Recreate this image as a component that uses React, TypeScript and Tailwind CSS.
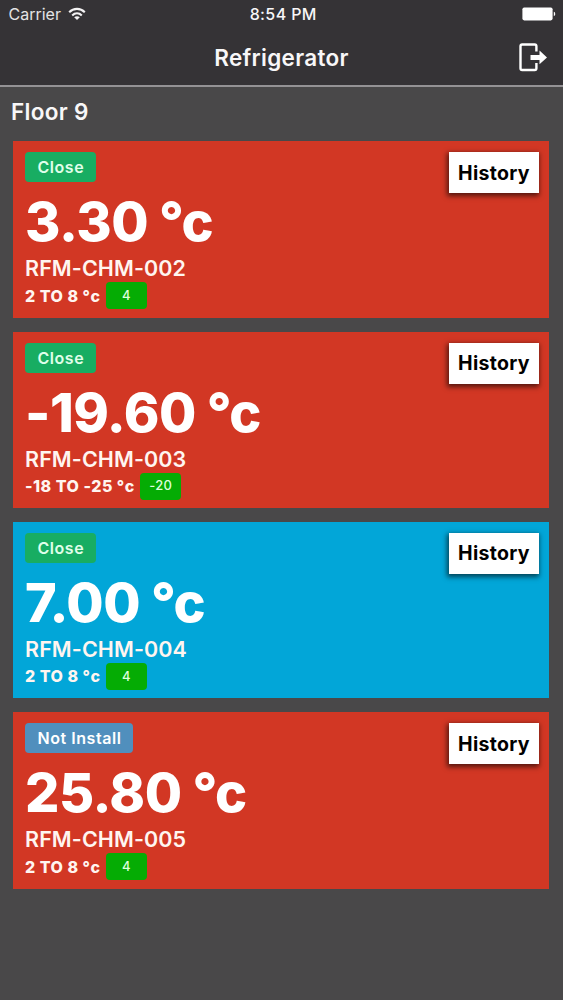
type Fridge = {
  code: string;
  temp: string;
  range: string;
  target: string;
  installed: boolean;
  alert: boolean;
};

const fridges: Fridge[] = [
  { code: "RFM-CHM-002", temp: "3.30", range: "2 TO 8", target: "4", installed: true, alert: true },
  { code: "RFM-CHM-003", temp: "-19.60", range: "-18 TO -25", target: "-20", installed: true, alert: true },
  { code: "RFM-CHM-004", temp: "7.00", range: "2 TO 8", target: "4", installed: true, alert: false },
  { code: "RFM-CHM-005", temp: "25.80", range: "2 TO 8", target: "4", installed: false, alert: true },
];

const WifiIcon = () => (
  <svg width="18" height="14" viewBox="0 0 18 14" fill="none" stroke="#f4f3f4" strokeWidth="2.1">
    <path d="M1.2 5.2C5.6 .8 12.4 .8 16.8 5.2" />
    <path d="M4.2 8.4C7 5.7 11 5.7 13.8 8.4" />
    <path d="M9 13L6.2 10.2C7.8 8.8 10.2 8.8 11.8 10.2Z" fill="#f4f3f4" stroke="none" />
  </svg>
);

const BatteryIcon = () => (
  <svg width="34" height="14" viewBox="0 0 34 14" fill="#fff">
    <rect x=".4" y=".4" width="30.2" height="13" rx="1.8" />
    <path d="M31.8 4.8C33.7 5.3 33.7 8.7 31.8 9.2Z" />
  </svg>
);

const LogoutIcon = () => (
  <svg width="29" height="29" viewBox="0 0 29 29" fill="none">
    <path d="M17.4 8.6V3.2Q17.4 1.5 15.7 1.5H3.2Q1.5 1.5 1.5 3.2V25.3Q1.5 27 3.2 27H15.7Q17.4 27 17.4 25.3V19.9" stroke="#fff" strokeWidth="2.4" />
    <path d="M11.5 11.9H20.5V7.6L28 14.4L20.5 21.2V16.9H11.5Z" fill="#fff" />
  </svg>
);

const Header = () => (
  <div className="h-[87px] bg-[#353336] border-b-2 border-[#949295] text-[#f8f7f8]">
    <div className="grid grid-cols-[1fr_auto_1fr] items-center h-7 pl-[8.5px] pr-[7px]">
      <div className="flex items-center gap-[7px] text-[16px] text-[#e4e3e4]">
        <span>Carrier</span>
        <WifiIcon />
      </div>
      <div className="pl-[2px] text-center text-[16px] font-medium tracking-[0.4px]">8:54 PM</div>
      <div className="flex justify-end">
        <BatteryIcon />
      </div>
    </div>
    <div className="grid grid-cols-[1fr_auto_1fr] items-center h-[58px] px-[15px]">
      <div></div>
      <div className="pt-px text-[22.5px] font-semibold tracking-[0.3px]">Refrigerator</div>
      <div className="flex justify-end">
        <LogoutIcon />
      </div>
    </div>
  </div>
);

const Card = ({ fridge }: { fridge: Fridge }) => (
  <div className={`flex justify-between items-start h-[176.5px] pl-3 pr-[10px] pt-[11px] text-white ${fridge.alert ? "bg-[#d23724]" : "bg-[#02a6d8]"}`}>
    <div>
      <div className={`inline-flex items-center h-[30px] pl-[12.5px] pr-3 rounded-[4px] text-[16px] font-semibold tracking-[0.55px] ${fridge.installed ? "bg-[#18ad62] text-[#e0ffea]" : "bg-[#508fbd]"}`}>
        {fridge.installed ? "Close" : "Not Install"}
      </div>
      <div className="h-[64px] mt-[8px] text-[54px] leading-[64px] font-extrabold tracking-[-0.5px] whitespace-nowrap">
        {fridge.temp}
        <span className="ml-[11px] tracking-[-2.5px]">°c</span>
      </div>
      <div className="h-[26px] mt-[1px] text-[21.5px] leading-[26px] font-semibold tracking-[0.1px] text-[#fff5f0]">{fridge.code}</div>
      <div className="flex items-center gap-[5.5px] h-[27px] mt-px text-[#fff5f0]">
        <div className="text-[16px] font-extrabold tracking-[0.5px]">{fridge.range} °c</div>
        <div className="flex items-center justify-center w-[41px] h-[27px] rounded-[4px] bg-[#05ac04] text-[13px] font-medium tracking-[0.3px] text-[#dcffdc]">
          {fridge.target}
        </div>
      </div>
    </div>
    <button className="w-[90px] h-[41px] pt-px bg-white text-black text-[19.5px] font-bold tracking-[0.3px] shadow-[-1px_2px_5px_1px_rgba(0,0,0,0.6)]">
      History
    </button>
  </div>
);

export default function App() {
  return (
    <div className="w-[563px] h-[1000px] overflow-hidden bg-[#494849] font-['Inter',sans-serif]">
      <Header />
      <div className="h-[54.3px] pl-[11px] pt-[9px] text-[22.5px] leading-8 font-semibold tracking-[0.3px] text-[#f8f7f8]">Floor 9</div>
      <div className="flex flex-col gap-[13.8px] pl-[13px] pr-[14px]">
        {fridges.map((fridge) => (
          <Card key={fridge.code} fridge={fridge} />
        ))}
      </div>
    </div>
  );
}
